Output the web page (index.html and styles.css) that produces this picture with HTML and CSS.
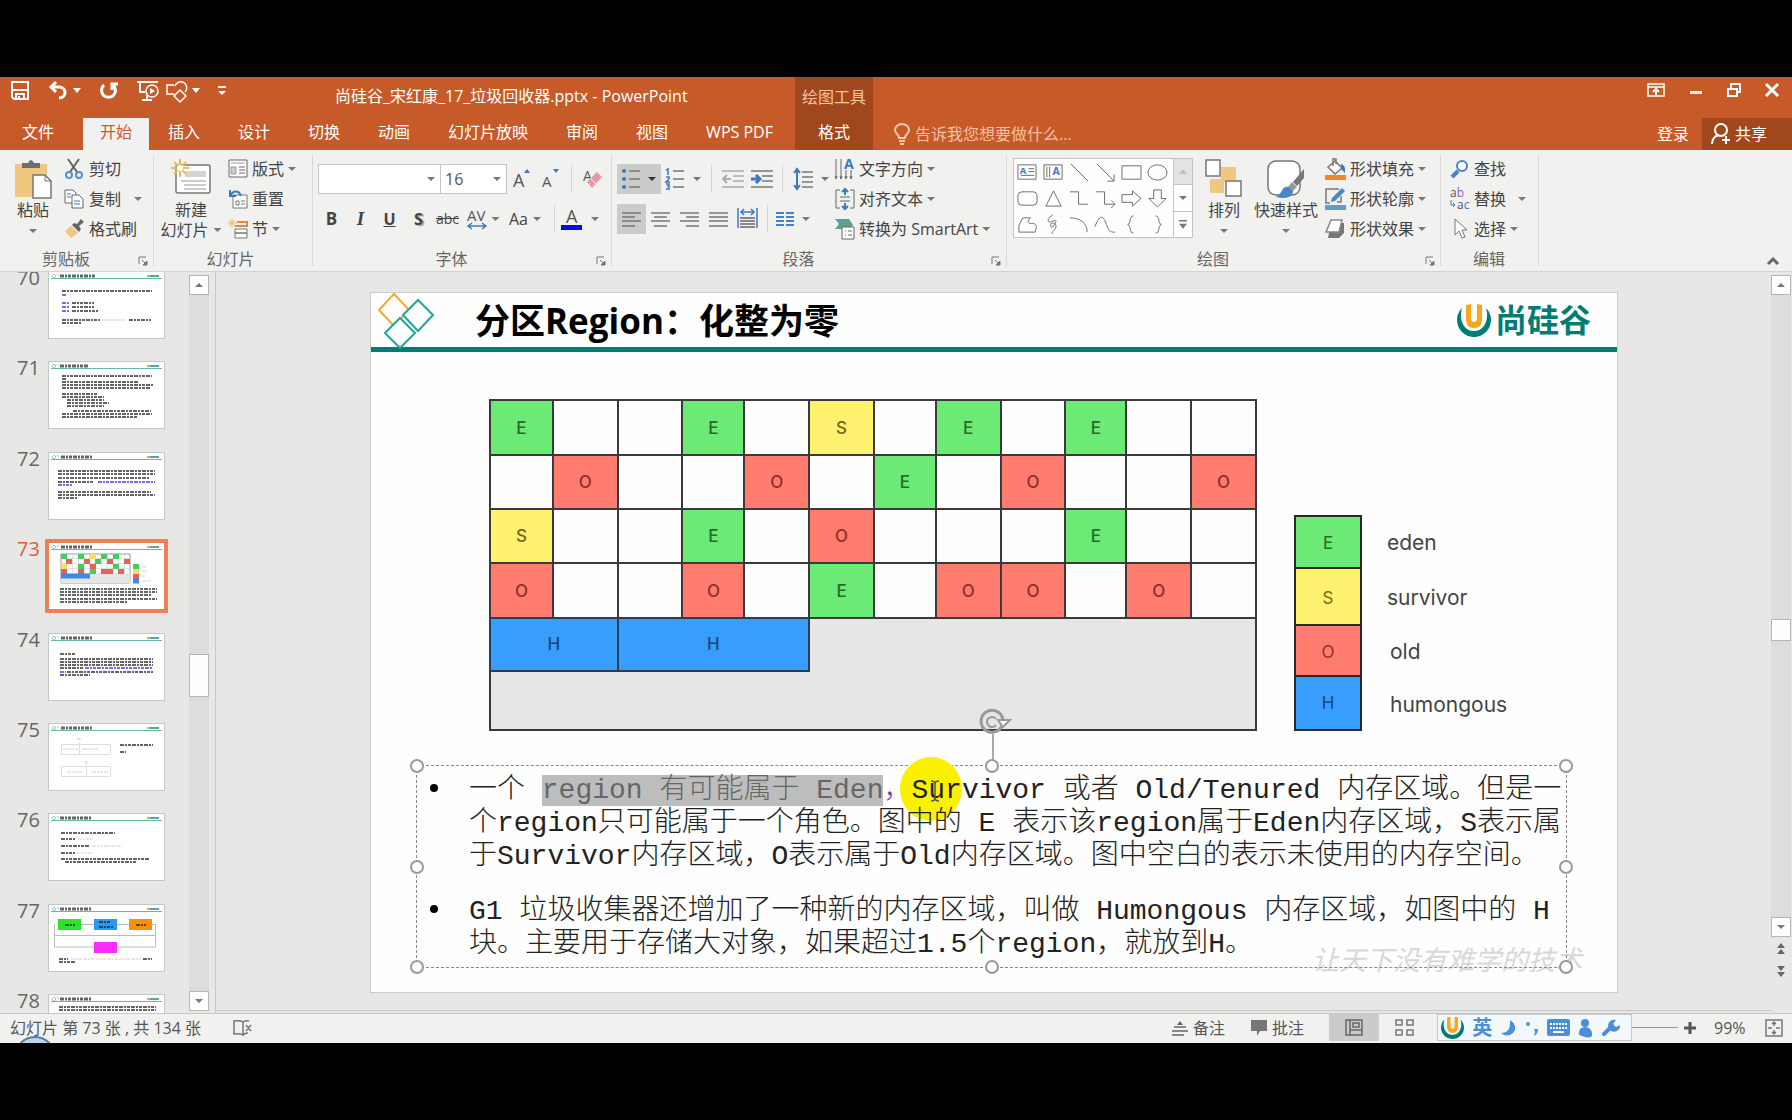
FILE: index.html
```html
<!DOCTYPE html>
<html lang="zh-CN">
<head>
<meta charset="utf-8">
<title>尚硅谷_宋红康_17_垃圾回收器.pptx - PowerPoint</title>
<link rel="stylesheet" href="styles.css">
</head>
<body>
<svg class="defs" width="0" height="0" aria-hidden="true">
  <defs>
    <symbol id="launcher" viewBox="0 0 10 10"><path d="M1 8V1h7" fill="none" stroke="#777"/><path d="M4 4l4 4M9 5v4H5z" fill="#777" stroke="#777"/></symbol>
    <symbol id="ulogo" viewBox="0 0 34 34"><path d="M5 5A17 17 0 1 0 29 5C32 14 29 28 17 28S2 14 5 5z" fill="#007d72"/><path d="M9 2l5-1v14q0 4 3 4t3-4V1l5 1v14q0 9-8 9t-8-9z" fill="#f9a61a"/></symbol>
    <symbol id="thumbhead" viewBox="0 0 115 8"><path d="M5 2l2 2-2 2-2-2zM8 2l2 2" fill="none" stroke="#8fd0c8" stroke-width="1"/><path d="M2 6.500H113" stroke="#63b7ae"/><path d="M98 4h12" stroke="#5aa79f" stroke-width="2"/><path d="M98 4h3" stroke="#d8b04e" stroke-width="2"/></symbol>
  </defs>
</svg>
<div class="app">
  <header class="titlebar">
    <div class="title-left">
      <div class="caption">
        <div class="qat">
          <button aria-label="保存"><svg width="20" height="20" viewBox="0 0 20 20" fill="none" stroke="#fff" stroke-width="2"><path d="M2 1h16v17H4l-2-2zM3 9h14M6 18v-5h8v5M9 15v3"/></svg></button>
          <button class="undo" aria-label="撤消"><svg width="20" height="20" viewBox="0 0 20 20" fill="none" stroke="#fff" stroke-width="3"><path d="M8 1L3 6l5 5M3 6h8c8 0 8 11 0 11"/></svg></button><i class="caret light"></i>
          <button class="redo" aria-label="重复"><svg width="20" height="20" viewBox="0 0 20 20" fill="none" stroke="#fff" stroke-width="3"><path d="M5 4a7 7 0 1 0 9 0M13 9V3h6" /></svg></button>
          <button class="show" aria-label="放映"><svg width="22" height="22" viewBox="0 0 22 22" fill="none" stroke="#fff" stroke-width="1.500"><path d="M0 2h21M3 2v10h5M10 15v4M5 20h10" stroke-width="2"/><circle cx="15" cy="11" r="6"/><path d="M13 8l5 3-5 3z" fill="#fff" stroke="none"/></svg></button>
          <button class="shapes-q" aria-label="形状"><svg width="22" height="22" viewBox="0 0 22 22" fill="none" stroke="#fff" stroke-width="1.500"><path d="M8 14H1V5h7M9 6a6 6 0 1 1 10 6M14 10l6 6-6 6-6-6z"/></svg></button><i class="caret light"></i>
          <button class="more-q" aria-label="自定义"><svg width="8" height="10" viewBox="0 0 8 10" fill="#fff"><path d="M0 0h8v2H0zM0 5h8L4 9z"/></svg></button>
        </div>
        <h1>尚硅谷_宋红康_17_垃圾回收器.pptx - PowerPoint</h1>
      </div>
      <nav class="tabs">
        <a href="#" class="file">文件</a><a href="#" class="active">开始</a><a href="#">插入</a><a href="#">设计</a><a href="#">切换</a><a href="#">动画</a><a href="#">幻灯片放映</a><a href="#">审阅</a><a href="#">视图</a><a href="#">WPS PDF</a>
      </nav>
    </div>
    <div class="context"><span>绘图工具</span><a href="#">格式</a></div>
    <label class="tellme"><svg width="16" height="22" viewBox="0 0 16 22" fill="none" stroke="#f3c8b2" stroke-width="2"><path d="M5 15c0-4-4-4-4-8a7 6 0 0 1 14 0c0 4-4 4-4 8zM5 18h6M6 21h4"/></svg><input type="text" placeholder="告诉我您想要做什么..." aria-label="告诉我"></label>
    <div class="title-right">
      <div class="win">
        <button aria-label="功能区显示选项"><svg width="18" height="14" viewBox="0 0 18 14" fill="none" stroke="#fff" stroke-width="2"><path d="M1 1h16v12H1zM1 4h16" stroke-width="1.500"/><path d="M9 12V7M6 9l3-3 3 3"/></svg></button>
        <button aria-label="最小化"><svg width="14" height="14" viewBox="0 0 14 14"><path d="M1 8h12v3H1z" fill="#fff"/></svg></button>
        <button aria-label="还原"><svg width="14" height="14" viewBox="0 0 14 14" fill="none" stroke="#fff" stroke-width="2"><path d="M1 6h9v7H1zM4 5V1h9v8h-3"/></svg></button>
        <button aria-label="关闭"><svg width="14" height="14" viewBox="0 0 14 14" stroke="#fff" stroke-width="3"><path d="M1 1l12 12M13 1L1 13"/></svg></button>
      </div>
      <div class="account"><a href="#">登录</a><button class="share"><svg width="20" height="22" viewBox="0 0 20 22" fill="none" stroke="#fff" stroke-width="2"><circle cx="10" cy="7" r="6"/><path d="M1 21c0-5 3-8 7-9M15 13v8M11 17h8"/></svg>共享</button></div>
    </div>
  </header>

  <section class="ribbon">
    <div class="group g-clip">
      <div class="body">
        <button class="big"><svg width="38" height="40" viewBox="0 0 38 40"><path d="M1 5h32v33H1z" fill="#f0c77e"/><path d="M8 9V4h6q3-6 6 0h6v5z" fill="#6e6e6e"/><path d="M19 16h12l6 6v17H19z" fill="#fff" stroke="#777" stroke-width="1.500"/><path d="M31 16v6h6" fill="none" stroke="#777"/></svg><span>粘贴</span><i class="caret"></i></button>
        <div class="stack">
          <button><svg width="20" height="20" viewBox="0 0 20 20" fill="none" stroke="#666" stroke-width="2"><path d="M4 0l9 13M15 0L6 13"/><g stroke="#5b8fce"><circle cx="5" cy="16" r="3"/><circle cx="15" cy="16" r="3"/></g></svg>剪切</button>
          <button><svg width="20" height="20" viewBox="0 0 20 20" fill="#fff" stroke="#666"><path d="M1 1h8l3 3v10H1z"/><path d="M8 6h7l4 4v9H8z"/><path d="M3 5h4M3 8h4M10 12h6M10 15h6" stroke="#3c78c0"/></svg>复制<i class="caret far"></i></button>
          <button><svg width="20" height="20" viewBox="0 0 20 20"><path d="M1 12l6-5 7 7-7 5z" fill="#f0c77e"/><path d="M8 6l7 7 2-3-2-3 5-4-3-3-4 5-3-1z" fill="#666"/></svg>格式刷</button>
        </div>
      </div>
      <div class="foot"><span>剪贴板</span><svg width="10" height="10"><use href="#launcher"/></svg></div>
    </div>

    <div class="group g-slides">
      <div class="body">
        <button class="big"><svg width="40" height="40" viewBox="0 0 40 40"><rect x="5" y="6" width="34" height="28" rx="2" fill="#fff" stroke="#777" stroke-width="1.500"/><path d="M14 12h21v6H14z" fill="#d4d4d4"/><path d="M10 22h25M13 26h22M13 30h22" stroke="#999"/><path d="M9 0v18M0 9h18M3 3l12 12M15 3L3 15" stroke="#f0b957" stroke-width="2"/><circle cx="9" cy="9" r="3" fill="#fff"/></svg><span>新建</span><span class="wide">幻灯片<i class="caret"></i></span></button>
        <div class="stack">
          <button><svg width="20" height="20" viewBox="0 0 20 20" fill="#fff" stroke="#666"><path d="M1 1h18v17H1z"/><path d="M3 4h14M3 8h5v7H3z" fill="#ccc" stroke="#999"/><path d="M11 8h6M11 11h6M11 14h6"/></svg>版式<i class="caret"></i></button>
          <button><svg width="20" height="20" viewBox="0 0 20 20" fill="#fff" stroke="#777"><path d="M5 6h14v13H5z"/><path d="M8 12h3v4H8zM13 12h4M13 15h4"/><path d="M2 1v6h6M2 7c3-6 9-6 11 0" fill="none" stroke="#3c78c0" stroke-width="2"/></svg>重置</button>
          <button><svg width="20" height="20" viewBox="0 0 20 20" fill="none"><path d="M4 0v9M0 4h9M1 1l6 6M7 1L1 7" stroke="#f0b957"/><path d="M9 3h10v4H7" stroke="#e08b3c" stroke-width="2"/><path d="M7 10h12v4H7zM7 14h12v5H7z" fill="#fff" stroke="#777"/></svg>节<i class="caret"></i></button>
        </div>
      </div>
      <div class="foot"><span>幻灯片</span></div>
    </div>

    <div class="group g-font">
      <div class="body rows">
        <div class="row">
          <span class="combo face"><select aria-label="字体"><option></option></select><i class="caret"></i></span><span class="combo size"><select aria-label="字号"><option>16</option></select><i class="caret"></i></span>
          <button class="t29" aria-label="增大字号"><svg width="18" height="22" viewBox="0 0 18 22"><text x="0" y="19" class="ico" font-size="18">A</text><path d="M11 5l3-4 3 4z" fill="#3c78c0"/></svg></button>
          <button class="t29" aria-label="减小字号"><svg width="18" height="22" viewBox="0 0 18 22"><text x="0" y="19" class="ico" font-size="15">A</text><path d="M11 1h6l-3 4z" fill="#3c78c0"/></svg></button>
          <i class="sep"></i>
          <button class="t29" aria-label="清除格式"><svg width="20" height="22" viewBox="0 0 20 22"><text x="0" y="13" class="ico" font-size="14">A</text><path d="M4 14L14 4l5 5L9 20z" fill="#e899a8"/><path d="M7 10l6 6" stroke="#f1f1f0"/></svg></button>
        </div>
        <div class="row fmt">
          <button class="t29"><b>B</b></button><button class="t29"><i class="it">I</i></button><button class="t29"><u>U</u></button><button class="t29 shadow">S</button><button class="t29 strike">abc</button>
          <button class="av" aria-label="字符间距"><svg width="20" height="22" viewBox="0 0 20 22"><text x="0" y="13" class="ico" font-size="15">AV</text><path d="M2 18h16M5 15l-4 3 4 3M15 15l4 3-4 3" fill="none" stroke="#3c78c0" stroke-width="1.500"/></svg><i class="caret"></i></button>
          <button class="aa">Aa<i class="caret"></i></button>
          <i class="sep"></i>
          <button class="fc" aria-label="字体颜色"><svg width="22" height="24" viewBox="0 0 22 24"><text x="5" y="16" class="ico" font-size="18">A</text><path d="M0 18h21v5H0z" fill="#0a0aee"/></svg><i class="caret"></i></button>
        </div>
      </div>
      <div class="foot"><span>字体</span><svg width="10" height="10"><use href="#launcher"/></svg></div>
    </div>

    <div class="group g-para">
      <div class="body">
        <div class="rows">
          <div class="row">
            <button class="on p44" aria-label="项目符号"><svg width="18" height="22" viewBox="0 0 18 22"><g fill="#3c78c0"><circle cx="2" cy="3" r="2"/><circle cx="2" cy="11" r="2"/><circle cx="2" cy="19" r="2"/></g><path d="M7 3h11M7 11h11M7 19h11" stroke="#777" stroke-width="1.500"/></svg><i class="caret dark"></i></button>
            <button class="p44" aria-label="编号"><svg width="20" height="22" viewBox="0 0 20 22"><path d="M1 2l2-1v6M1 9h3v2l-3 3h4M1 16h3v5H1M2 18h2" fill="none" stroke="#3c78c0" stroke-width="1.500"/><path d="M8 3h11M8 11h11M8 19h11" stroke="#777" stroke-width="1.500"/></svg><i class="caret"></i></button>
            <i class="sep"></i>
            <button class="t29" aria-label="减少缩进"><svg width="22" height="18" viewBox="0 0 22 18" stroke="#aaa" stroke-width="1.500" fill="none"><path d="M0 1h22M11 6h11M11 11h11M0 17h22"/><path d="M1 9h8M5 5L1 9l4 4" stroke-width="2"/></svg></button>
            <button class="t29" aria-label="增加缩进"><svg width="22" height="18" viewBox="0 0 22 18" stroke="#777" stroke-width="1.500" fill="none"><path d="M0 1h22M11 6h11M11 11h11M0 17h22"/><path d="M0 9h9M5 5l4 4-4 4" stroke="#3c78c0" stroke-width="3"/></svg></button>
            <i class="sep"></i>
            <button class="p44" aria-label="行距"><svg width="20" height="22" viewBox="0 0 20 22" fill="none"><path d="M4 1v20M1 5l3-4 3 4M1 17l3 4 3-4" stroke="#3c78c0" stroke-width="2"/><path d="M9 4h11M9 9h11M9 14h11M9 19h11" stroke="#777" stroke-width="1.500"/></svg><i class="caret"></i></button>
          </div>
          <div class="row">
            <button class="on t29" aria-label="左对齐"><svg width="19" height="15" viewBox="0 0 19 15" stroke="#777" stroke-width="1.500"><path d="M0 1h19M0 5h13M0 9h19M0 14h13"/></svg></button>
            <button class="t29" aria-label="居中"><svg width="19" height="15" viewBox="0 0 19 15" stroke="#777" stroke-width="1.500"><path d="M0 1h19M3 5h13M0 9h19M3 14h13"/></svg></button>
            <button class="t29" aria-label="右对齐"><svg width="19" height="15" viewBox="0 0 19 15" stroke="#777" stroke-width="1.500"><path d="M0 1h19M6 5h13M0 9h19M6 14h13"/></svg></button>
            <button class="t29" aria-label="两端对齐"><svg width="19" height="15" viewBox="0 0 19 15" stroke="#777" stroke-width="1.500"><path d="M0 1h19M0 5h19M0 9h19M0 14h19"/></svg></button>
            <button class="t29" aria-label="分散对齐"><svg width="21" height="22" viewBox="0 0 21 22" fill="none"><path d="M1 0v20M20 0v20M4 4h13M7 1L4 4l3 3M14 1l3 3-3 3" stroke="#3c78c0" stroke-width="1.500"/><path d="M3 10h15M3 13h15M3 16h15M3 19h15" stroke="#666" stroke-width="1.500"/></svg></button>
            <i class="sep s2"></i>
            <button class="cols" aria-label="分栏"><svg width="18" height="16" viewBox="0 0 18 16" stroke="#4a80c4" stroke-width="2"><path d="M0 2h8M0 6h8M0 10h8M0 14h8M10 2h8M10 6h8M10 10h8M10 14h8"/></svg><i class="caret"></i></button>
          </div>
        </div>
        <div class="stack">
          <button><svg width="20" height="22" viewBox="0 0 20 22"><path d="M1 1v19M6 1v19M11 12v8M16 12v8M0 18l1 3 1-3M5 18l1 3 1-3M10 18l1 3 1-3M15 18l1 3 1-3" stroke="#666" fill="none"/><text x="9" y="11" class="blue" font-size="14">A</text></svg>文字方向<i class="caret"></i></button>
          <button><svg width="20" height="22" viewBox="0 0 20 22" fill="none"><path d="M5 2H1v18h4M15 2h4v18h-4M5 9h10M5 13h10" stroke="#666"/><path d="M10 1v6M7 4l3-3 3 3M10 15v6M7 18l3 3 3-3" stroke="#3c78c0" stroke-width="2"/></svg>对齐文本<i class="caret"></i></button>
          <button><svg width="20" height="22" viewBox="0 0 20 22"><path d="M0 1h14l4 6-3 4H0l4-5z" fill="#5ba08f"/><path d="M7 9h12v12H7z" fill="#fff" stroke="#666"/><path d="M10 13h1M13 13h4M10 17h1M13 17h4" stroke="#666"/></svg>转换为 SmartArt<i class="caret"></i></button>
        </div>
      </div>
      <div class="foot"><span>段落</span><svg width="10" height="10"><use href="#launcher"/></svg></div>
    </div>

    <div class="group g-draw">
      <div class="body">
        <div class="gallery">
          <div class="shapes">
            <svg viewBox="0 0 22 22"><path d="M1 3h19v15H1z"/><path d="M12 7h6M12 10h6M4 14h14"/><text x="3" y="13" class="blue" font-size="10">A</text></svg>
            <svg viewBox="0 0 22 22"><path d="M1 3h19v15H1z"/><path d="M4 5v11M7 5v11"/><text x="10" y="14" class="blue" font-size="11">A</text></svg>
            <svg viewBox="0 0 22 22"><path d="M2 2l18 18"/></svg>
            <svg viewBox="0 0 22 22"><path d="M2 2l18 18M20 13v7h-7"/></svg>
            <svg viewBox="0 0 22 22"><path d="M1 4h20v14H1z"/></svg>
            <svg viewBox="0 0 22 22"><ellipse cx="11" cy="11" rx="10" ry="8"/></svg>
            <svg viewBox="0 0 22 22"><rect x="1" y="4" width="20" height="14" rx="4"/></svg>
            <svg viewBox="0 0 22 22"><path d="M11 3l8 16H3z"/></svg>
            <svg viewBox="0 0 22 22"><path d="M1 4h9v13h10"/></svg>
            <svg viewBox="0 0 22 22"><path d="M1 4h9v13h11M17 13l4 4-4 4"/></svg>
            <svg viewBox="0 0 22 22"><path d="M1 7h11V3l9 8-9 8v-4H1z"/></svg>
            <svg viewBox="0 0 22 22"><path d="M7 2h8v9h5l-9 9-9-9h5z"/></svg>
            <svg viewBox="0 0 22 22"><path d="M2 19V12L6 4h8c-4 4-2 6 1 6 4-1 6 2 5 5l-1 4z"/></svg>
            <svg viewBox="0 0 22 22"><path d="M10 1c-6 4-6 9-1 7s6-2 3 3-4 3-4 0 8-1 5 4-4 3-3 6"/></svg>
            <svg viewBox="0 0 22 22"><path d="M1 4c10 0 18 5 18 15"/></svg>
            <svg viewBox="0 0 22 22"><path d="M0 13C6-2 9 3 12 11s5 8 9 8"/></svg>
            <svg viewBox="0 0 22 22"><path d="M13 2c-5 0-2 8-6 9 4 1 1 9 6 9"/></svg>
            <svg viewBox="0 0 22 22"><path d="M9 2c5 0 2 8 6 9-4 1-1 9-6 9"/></svg>
          </div>
          <div class="gscroll"><button class="off" aria-label="上一行"><i class="caret up"></i></button><button aria-label="下一行"><i class="caret"></i></button><button aria-label="更多"><i class="caret line"></i></button></div>
        </div>
        <button class="big arrange"><svg width="38" height="40" viewBox="0 0 38 40"><path d="M16 8h15v15H16zM5 20h14v14H5z" fill="#f0c77e"/><path d="M1 1h14v16H1zM21 22h15v15H21z" fill="#fff" stroke="#777" stroke-width="1.500"/></svg><span>排列</span><i class="caret"></i></button>
        <button class="big quick"><svg width="40" height="40" viewBox="0 0 40 40"><rect x="2" y="2" width="32" height="34" rx="8" fill="#fff" stroke="#777" stroke-width="1.500"/><path d="M38 10v9l-7 8-4-4z" fill="#777"/><path d="M26 23l5 5-4 4-5-4z" fill="#999"/><path d="M10 38c7-3 5-12 13-10l4 4c0 7-8 8-17 6z" fill="#4b87c8"/></svg><span>快速样式</span><i class="caret"></i></button>
        <div class="stack">
          <button><svg width="21" height="22" viewBox="0 0 21 22"><path d="M0 17h21v5H0z" fill="#f0882b"/><path d="M3 9l7-6 7 7-7 6zM8 8V1h3v5" fill="#fff" stroke="#777" stroke-width="1.500"/><path d="M16 6q5 1 4 9l-4-4z" fill="#3c78c0"/></svg>形状填充<i class="caret"></i></button>
          <button><svg width="21" height="22" viewBox="0 0 21 22"><path d="M0 17h21v5H0z" fill="#5f9bd4"/><path d="M14 1H1v14h4M16 8v6h-4" fill="none" stroke="#777" stroke-width="1.500"/><path d="M6 14l1-4L17 0l3 3L10 13z" fill="#4b87c8"/></svg>形状轮廓<i class="caret"></i></button>
          <button><svg width="21" height="22" viewBox="0 0 21 22"><path d="M6 5h13v10l-5 5H3z" fill="#777"/><path d="M6 2h11l-3 12H1z" fill="#fff" stroke="#888" stroke-width="1.500"/></svg>形状效果<i class="caret"></i></button>
        </div>
      </div>
      <div class="foot"><span>绘图</span><svg width="10" height="10"><use href="#launcher"/></svg></div>
    </div>

    <div class="group g-edit">
      <div class="body">
        <div class="stack">
          <button><svg width="20" height="20" viewBox="0 0 20 20" fill="#fff" stroke="#4b80c0" stroke-width="2"><path d="M8 12l-6 6" stroke-width="4"/><circle cx="12" cy="7" r="5"/></svg>查找</button>
          <button><svg width="20" height="22" viewBox="0 0 20 22"><text x="0" y="9" font-size="12" class="ico">a<tspan fill="#9a5cc0">b</tspan></text><text x="7" y="21" font-size="12" class="ico">a<tspan fill="#3c78c0">c</tspan></text><path d="M1 12v5h4M3 15l2 2-2 2" fill="none" stroke="#3c78c0"/></svg>替换<i class="caret far"></i></button>
          <button><svg width="20" height="22" viewBox="0 0 20 22" fill="#fff" stroke="#777"><path d="M5 1v16l4-4 3 7 3-1-3-7h5z"/></svg>选择<i class="caret"></i></button>
        </div>
      </div>
      <div class="foot"><span>编辑</span></div>
    </div>
    <button class="collapse" aria-label="折叠功能区"><svg width="12" height="9" viewBox="0 0 12 9" fill="none" stroke="#666" stroke-width="3"><path d="M1 7l5-5 5 5"/></svg></button>
  </section>

  <main class="work">
    <aside class="outline">
      <ol class="thumbs">
        <li><span>70</span><svg viewBox="0 0 115 66"><use href="#thumbhead" width="115" height="8"/><g class="tx"><path d="M11 4h35" class="k"/><path d="M13 19h90M23 31h22M23 35h22M23 39h26M13 48h38M13 51h20M80 48h22"/><path d="M13 23h5M13 31h7M13 35h7M13 39h7" class="bl"/><path d="M53 48h24" class="g"/></g></svg></li>
        <li><span>71</span><svg viewBox="0 0 115 66"><use href="#thumbhead" width="115" height="8"/><g class="tx"><path d="M11 4h28" class="k"/><path d="M13 14h90M13 17h5M13 20h76M13 23h91M13 26h88M13 32h36M13 35h42M18 38h37M18 41h42M18 44h37M24 49h78M13 52h90M13 55h75"/></g></svg></li>
        <li><span>72</span><svg viewBox="0 0 115 66"><use href="#thumbhead" width="115" height="8"/><g class="tx"><path d="M12 4h32" class="k"/><path d="M9 18h97M9 21h97M9 25h92M9 29h36M9 39h93M9 42h97M9 45h20"/><path d="M49 29h57M9 32h14" class="bl"/></g></svg></li>
        <li class="sel"><span>73</span><svg viewBox="0 0 115 66"><use href="#thumbhead" width="115" height="8"/><path d="M12 11h69v29H12z" fill="#fff" stroke="#999"/><path d="M12 30h69v10H12z" fill="#e5e5e5"/><path d="M12 15.500h69M12 20.500h69M12 25.500h69M17.500 11v19M23.500 11v19M29.500 11v19M35 11v19M40.500 11v19M46.500 11v19M52.500 11v19M58 11v19M64 11v19M69.500 11v19M75.500 11v19" stroke="#ccc" stroke-width=".6"/><path d="M12 11h6v5h-6zM29 11h6v5h-6zM52 11h6v5h-6zM64 11h6v5h-6zM46 16h6v5h-6zM29 21h6v5h-6zM64 21h6v5h-6zM41 26h6v5h-6zM84 21h6v5h-6z" fill="#49c964"/><path d="M17 16h6v5h-6zM35 16h6v5h-6zM58 16h6v5h-6zM75 16h6v5h-6zM41 21h6v5h-6zM12 26h6v5h-6zM29 26h6v5h-6zM52 26h12v5H52zM69 26h6v5h-6zM84 31h6v5h-6z" fill="#e4625c"/><path d="M41 11h6v5h-6zM12 21h6v5h-6zM84 26h6v5h-6z" fill="#f3dd63"/><path d="M12 30.500h29v5H12zM84 35.500h6v5h-6z" fill="#3a8ae0"/><g class="tx"><path d="M12 4h32" class="k"/><path d="M93 24h4M93 28h6M93 33h3M93 38h9" class="g"/><path d="M11 46h97M11 49h97M11 52h92M11 56h97M11 59h68"/></g></svg></li>
        <li><span>74</span><svg viewBox="0 0 115 66"><use href="#thumbhead" width="115" height="8"/><g class="tx"><path d="M12 4h32" class="k"/><path d="M11 20h15M11 25h93M11 28h93M11 31h93M11 34h24M18 38h86M11 41h30"/><path d="M36 34h68M11 38h6" class="bl"/></g></svg></li>
        <li><span>75</span><svg viewBox="0 0 115 66"><use href="#thumbhead" width="115" height="8"/><path d="M12.500 20.500h49v10h-49zM30.500 18v12M12.500 42.500h49v10h-49zM37.500 39v13" fill="none" stroke="#ddd"/><g class="tx"><path d="M12 4h32" class="k"/><path d="M28 15h5M14 25h15M33 25h17M35 38h5M18 48h15M43 48h16" class="g"/><path d="M71 21h33M71 28h6"/></g></svg></li>
        <li><span>76</span><svg viewBox="0 0 115 66"><use href="#thumbhead" width="115" height="8"/><g class="tx"><path d="M11 4h31" class="k"/><path d="M12 19h54M12 25h14M12 32h28M12 39h14M12 45h89M16 48h72"/><path d="M29 25h15M43 32h30M27 39h16" class="g"/></g></svg></li>
        <li><span>77</span><svg viewBox="0 0 115 66"><use href="#thumbhead" width="115" height="8"/><path d="M5.500 19v23h40M5 30.500h101M106.500 19v23H68M32 19.500h13M68 19.500h12M103 19.500h3" fill="none" stroke="#bbb"/><path d="M9 14h23v11H9z" fill="#2be32b"/><path d="M45 14h23v11H45z" fill="#2d95f5"/><path d="M80 14h23v11H80z" fill="#fb8f05"/><path d="M45 37h23v11H45z" fill="#fb2dfb"/><g class="tx"><path d="M11 4h31" class="k"/><path d="M16 20h10M50 17h12M50 22h14M87 20h10M10 54h9M10 57h17M94 54h9"/><path d="M22 54h70" class="g"/></g></svg></li>
        <li><span>78</span><svg viewBox="0 0 115 66"><use href="#thumbhead" width="115" height="8"/><g class="tx"><path d="M11 4h31" class="k"/><path d="M10 12h97M10 15h97"/></g></svg></li>
      </ol>
      <div class="vscroll left"><button aria-label="向上"><i class="caret up"></i></button><span class="knob"></span><button aria-label="向下"><i class="caret"></i></button></div>
    </aside>
    <section class="stage">
      <article class="slide">
        <header class="slide-head">
          <svg class="diamonds" width="58" height="56" viewBox="0 0 58 56" fill="none" stroke-width="2"><path d="M17 2l15 16-15 16L2 18z" stroke="#f5a92e"/><path d="M41 8l15 15-15 16-15-16z" stroke="#1fa79b" fill="#fdfefd"/><path d="M23 26l15 15-15 15L8 41z" stroke="#1fa79b" fill="#fdfefd"/></svg>
          <h2>分区Region<span class="colon">：</span>化整为零</h2>
          <div class="brand"><svg width="34" height="34"><use href="#ulogo"/></svg><span>尚硅谷</span></div>
        </header>
        <div class="figure">
          <div class="heap">
            <b class="e">E</b><b></b><b></b><b class="e">E</b><b></b><b class="s">S</b><b></b><b class="e">E</b><b></b><b class="e">E</b><b></b><b></b>
            <b></b><b class="o">O</b><b></b><b></b><b class="o">O</b><b></b><b class="e">E</b><b></b><b class="o">O</b><b></b><b></b><b class="o">O</b>
            <b class="s">S</b><b></b><b></b><b class="e">E</b><b></b><b class="o">O</b><b></b><b></b><b></b><b class="e">E</b><b></b><b></b>
            <b class="o">O</b><b></b><b></b><b class="o">O</b><b></b><b class="e">E</b><b></b><b class="o">O</b><b class="o">O</b><b></b><b class="o">O</b><b></b>
            <b class="free"></b><b class="h h1">H</b><b class="h h2">H</b>
          </div>
          <dl class="legend">
            <dt class="e">E</dt><dd>eden</dd>
            <dt class="s">S</dt><dd>survivor</dd>
            <dt class="o">O</dt><dd class="in">old</dd>
            <dt class="h">H</dt><dd class="in">humongous</dd>
          </dl>
        </div>
        <p class="watermark">让天下没有难学的技术</p>
        <div class="textbox">
          <span class="pointer"></span>
          <ul>
            <li>一个 <mark>region 有可能属于 Eden</mark><span class="comma">，</span>Survivor 或者 Old/Tenured 内存区域。但是一<br>个region只可能属于一个角色。图中的 E 表示该region属于Eden内存区域，S表示属<br>于Survivor内存区域，O表示属于Old内存区域。图中空白的表示未使用的内存空间。</li>
            <li>G1 垃圾收集器还增加了一种新的内存区域，叫做 Humongous 内存区域，如图中的 H<br>块。主要用于存储大对象，如果超过1.5个region，就放到H。</li>
          </ul>
          <svg class="ibeam" width="10" height="22" viewBox="0 0 10 22" fill="none" stroke="#555" stroke-width="1.500"><path d="M1 1q4 0 4 3v14q0 3-4 3M9 1q-4 0-4 3M5 18q0 3 4 3"/></svg>
          <span class="stem"></span>
          <svg class="rotate" width="34" height="28" viewBox="0 0 34 28" fill="none" stroke="#999" stroke-width="3"><path d="M24 18a11 11 0 1 1 1-6" /><path d="M20 12h12l-7 7z" fill="#fff" stroke-width="2"/><path d="M18 17a5 5 0 1 1 0-6" stroke-width="2"/></svg>
          <i class="handle nw"></i><i class="handle n"></i><i class="handle ne"></i><i class="handle w"></i><i class="handle ea"></i><i class="handle sw"></i><i class="handle so"></i><i class="handle se"></i>
        </div>
      </article>
    </section>
    <div class="vscroll right"><button aria-label="向上"><i class="caret up"></i></button><span class="knob"></span><button aria-label="向下"><i class="caret"></i></button>
      <button class="jump" aria-label="上一张"><svg width="10" height="12" viewBox="0 0 10 12" fill="#666"><path d="M5 0l4 5H1zM5 6l4 5H1z"/></svg></button>
      <button class="jump" aria-label="下一张"><svg width="10" height="12" viewBox="0 0 10 12" fill="#666"><path d="M5 5l4-5H1zM5 11l4-5H1z"/></svg></button></div>
  </main>

  <footer class="status">
    <span class="orb"></span>
    <span class="count">幻灯片 第 73 张 , 共 134 张</span>
    <svg class="spell" width="20" height="18" viewBox="0 0 20 18" fill="none" stroke="#777" stroke-width="1.500"><path d="M10 16q-3-2-9-1V2q6-1 9 1zM10 3q2-2 6-1M10 16q2-2 5-2M13 6l5 6M18 6l-5 6"/></svg>
    <button class="notes"><svg width="16" height="16" viewBox="0 0 16 16"><path d="M5 5l3-4 3 4z" fill="#666"/><path d="M2 7h12M0 11h16M0 15h12" stroke="#666" stroke-width="1.500"/></svg>备注</button>
    <button class="comments"><svg width="16" height="16" viewBox="0 0 16 16" fill="#777"><path d="M0 0h16v11H9l-3 5v-5H0z"/></svg>批注</button>
    <button class="view on" aria-label="普通视图"><svg width="18" height="17" viewBox="0 0 18 17" fill="none" stroke="#666" stroke-width="1.500"><path d="M1 1h16v15H1zM5 1v15M5 11h12M8 4h6v4H8z"/></svg></button>
    <button class="view" aria-label="幻灯片浏览"><svg width="19" height="17" viewBox="0 0 19 17" fill="none" stroke="#777" stroke-width="1.500"><path d="M1 1h6v5H1zM12 1h6v5h-6zM1 11h6v5H1zM12 11h6v5h-6z"/></svg></button>
    <div class="ime">
      <svg width="23" height="23"><use href="#ulogo"/></svg><b>英</b>
      <svg width="17" height="18" viewBox="0 0 17 18"><path d="M10 1q9 6 3 13-6 5-12 0 10 0 9-13z" fill="#4b8fd8"/></svg>
      <svg width="13" height="18" viewBox="0 0 13 18" fill="#4b8fd8"><circle cx="3" cy="5" r="2"/><path d="M9 10h4q0 5-4 7l1-4z"/></svg>
      <svg width="23" height="17" viewBox="0 0 23 17"><rect width="23" height="17" rx="2" fill="#4b8fd8"/><path d="M3 5h17M3 9h17" stroke="#fff" stroke-width="2" stroke-dasharray="2 1"/><path d="M6 13h11" stroke="#fff" stroke-width="2"/></svg>
      <svg width="15" height="18" viewBox="0 0 15 18" fill="#4b8fd8"><circle cx="7" cy="4" r="4"/><path d="M1 14q0-6 6-6t7 6-7 4-6-4z"/></svg>
      <svg width="19" height="18" viewBox="0 0 19 18"><path d="M3 15l8-8" stroke="#4b8fd8" stroke-width="4" stroke-linecap="round"/><path d="M15 1a6 6 0 1 0 4 5l-4 2-3-3z" fill="#4b8fd8"/></svg>
    </div>
    <span class="track"></span>
    <button class="plus" aria-label="放大"><svg width="12" height="12" viewBox="0 0 12 12" stroke="#555" stroke-width="3"><path d="M6 0v12M0 6h12"/></svg></button>
    <span class="zoom">99%</span>
    <button class="fit" aria-label="适应窗口"><svg width="18" height="18" viewBox="0 0 18 18" fill="none" stroke="#777" stroke-width="1.500"><path d="M1 1h16v16H1zM9 3v4M9 11v4M3 9h4M11 9h4M7 5l2-2 2 2M7 13l2 2 2-2"/></svg></button>
  </footer>
</div>
</body>
</html>
```
FILE: styles.css
```css
* { box-sizing: border-box; }
body {
  margin: 0; height: 100vh; padding: 77px 0; background: #000; color: #444; overflow: hidden;
  font: 16px/20px "Open Sans", "Noto Sans CJK SC", sans-serif;
}
button { border: 0; background: none; padding: 0; color: inherit; font: inherit; display: flex; align-items: center; justify-content: center; white-space: nowrap; }
a { color: inherit; text-decoration: none; }
svg { flex: none; display: block; overflow: visible; }
.defs { position: absolute; }
.app { height: 100%; display: flex; flex-direction: column; background: #e7e7e6; }

.caret { flex: none; width: 8px; height: 4px; background: #777; clip-path: polygon(0 0, 100% 0, 50% 100%); margin-left: 5px; }
.caret.light { background: #fff; height: 5px; margin: 0; }
.caret.dark { background: #333; }
.caret.up { clip-path: polygon(50% 0, 100% 100%, 0 100%); margin: 0; }
.caret.line { height: 9px; clip-path: polygon(0 0, 100% 0, 100% 20%, 0 20%, 0 45%, 100% 45%, 50% 100%, 0 45%); }
.caret.far { margin-left: 11px; }
.ico { fill: #555; font-family: "Open Sans", sans-serif; }
.blue { fill: #3c78c0; font-weight: 700; font-family: "Open Sans", sans-serif; }

/* title bar */
.titlebar { display: flex; height: 73px; flex: none; background: #c65a29; color: #fff; }
.title-left { width: 795px; display: flex; flex-direction: column; }
.caption { display: flex; height: 41px; }
.qat { display: flex; align-items: center; height: 27px; padding-left: 10px; width: 335px; }
.undo { margin: 0 5px 0 18px; }
.redo { margin-left: 18px; }
.show { margin-left: 18px; }
.shapes-q { margin: 0 4px 0 7px; }
.more-q { margin-left: 18px; }
h1 { margin: 0; font-size: 16px; font-weight: 400; line-height: 39px; white-space: nowrap; }
.tabs { display: flex; line-height: 29px; height: 32px; white-space: nowrap; }
.tabs a { padding: 0 19px; }
.tabs .file { width: 83px; padding-left: 22px; }
.tabs .active { width: 66px; padding: 0; text-align: center; background: #f1f1f0; color: #d2552b; }
.context { width: 78px; background: #a1471d; text-align: center; display: flex; flex-direction: column; }
.context span { line-height: 41px; color: #f6c5a4; }
.context a { line-height: 29px; }
.tellme { display: flex; align-self: flex-end; align-items: center; height: 32px; margin-left: 21px; gap: 5px; }
.tellme input { border: 0; background: none; padding: 0; width: 200px; font: inherit; color: #fff; outline: 0; }
.tellme input::placeholder { color: #f3c0a6; opacity: 1; }
.title-right { margin-left: auto; display: flex; flex-direction: column; align-items: flex-end; justify-content: space-between; }
.win { display: flex; gap: 24px; padding: 6px 13px 0 0; }
.account { display: flex; align-items: center; gap: 13px; height: 32px; line-height: 28px; }
.share { background: #a1471d; height: 32px; width: 90px; justify-content: flex-start; padding-left: 9px; gap: 4px; }

/* ribbon */
.ribbon { display: flex; height: 122px; flex: none; background: #f1f1f0; border-bottom: 1px solid #d2d3d2; }
.group { display: flex; flex-direction: column; position: relative; padding-top: 4px; background: linear-gradient(#d8d9d8, #d8d9d8) right 5px / 1px 111px no-repeat; }
.body { display: flex; height: 90px; }
.foot { display: flex; align-items: center; height: 27px; padding: 3px 6px 0 0; color: #666; line-height: 24px; }
.foot span { flex: 1; text-align: center; padding-right: 6px; }
.foot svg { margin-top: 4px; }
.big { flex-direction: column; justify-content: flex-start; padding-top: 5px; }
.big span { line-height: 22px; }
.big > .caret { margin: 8px 0 0; }
.big .wide { display: flex; align-items: center; line-height: 18px; }
.stack { display: grid; grid-auto-rows: 30px; justify-items: start; }
.stack button { gap: 4px; }
.stack .caret { margin-left: 0; }
.stack .caret.far { margin-left: 8px; }
.rows { display: flex; flex-direction: column; gap: 10px; padding-top: 10px; }
.row { display: flex; height: 30px; align-items: center; }
.row button { height: 30px; }
.t29 { width: 29px; }
.on { background: #cbcbca; }
.sep { width: 1px; height: 28px; background: #d2d3d2; margin: 0 6px; }
.g-clip { width: 154px; }
.g-clip .body { padding-left: 9px; gap: 7px; }
.g-clip .big { width: 48px; }
.g-clip .stack button { gap: 5px; }
.g-slides { width: 159px; }
.g-slides .body { padding-left: 6px; gap: 6px; }
.g-slides .big { width: 62px; }
.g-slides .foot { padding-right: 0; }
.g-font { width: 299px; }
.g-font .body { padding-left: 5px; height: 90px; }
.combo { position: relative; display: flex; align-items: center; height: 30px; background: #fff; border: 1px solid #c3c4c3; margin-right: -1px; }
.combo select { appearance: none; border: 0; background: none; width: 100%; height: 28px; padding: 0 4px; font: inherit; color: #555; }
.combo .caret { position: absolute; right: 5px; pointer-events: none; }
.face { width: 123px; }
.size { width: 67px; margin-right: 0; }
.fmt { margin-left: -1px; }
.fmt b { font-size: 17px; }
.fmt .it { font-family: "Liberation Serif", serif; font-size: 19px; font-weight: 700; }
.fmt u { font-weight: 700; }
.shadow { font-weight: 700; text-shadow: 2px 1px 1px #999; }
.strike { font-size: 14px; text-decoration: line-through; }
.av { width: 40px; padding-left: 2px; }
.aa { width: 46px; }
.fc { width: 38px; }
.fmt .fc .caret { margin-left: 8px; }
.g-para { width: 395px; }
.g-para .body { padding-left: 5px; }
.p44 { width: 44px; }
.g-para .p44 .caret { margin-left: 8px; }
.row .s2 { margin: 0 8px 0 5px; }
.cols .caret { margin-left: 8px; }
.g-para .stack { margin-left: 2px; }
.g-draw { width: 434px; }
.g-draw .body { padding-left: 6px; }
.gallery { display: flex; margin-top: 4px; height: 80px; width: 180px; border: 1px solid #c3c4c3; background: #fdfefd; }
.shapes { flex: 1; display: grid; grid-template-columns: repeat(6, 26px); grid-auto-rows: 26px; place-items: center; }
.shapes svg { width: 21px; height: 21px; fill: none; stroke: #6a6a6a; stroke-width: 1; }
.shapes svg text { fill: #3c78c0; stroke: none; }
.gscroll { width: 19px; display: flex; flex-direction: column; border-left: 1px solid #c3c4c3; }
.gscroll button { flex: 1; border-top: 1px solid #c3c4c3; }
.gscroll .caret { margin: 0; }
.gscroll .off { border: 0; background: #e3e3e3; }
.gscroll .off .caret { background: #bbb; }
.arrange { width: 42px; margin-left: 10px; }
.quick { width: 66px; margin: 0 6px 0 8px; }
.g-edit { width: 98px; }
.g-edit .body { padding-left: 9px; }
.g-edit .foot { padding-right: 0; }
.g-edit .foot span { padding-right: 2px; }
.collapse { margin: auto 13px 5px auto; }

/* work area */
.work { flex: 1; min-height: 0; display: flex; }
.outline { width: 216px; flex: none; display: flex; overflow: hidden; border-right: 1px solid #c6c8c7; }
.thumbs { list-style: none; margin: 0 0 -48px; padding: 0; width: 189px; flex: none; display: flex; flex-direction: column; justify-content: space-between; }
.thumbs li { display: flex; gap: 8px; padding-left: 17px; font-size: 20px; line-height: 12px; color: #666; }
.thumbs li span { width: 24px; }
.thumbs svg { width: 115px; height: 66px; background: #fff; outline: 1px solid #c3c8c6; overflow: hidden; }
.thumbs .sel { color: #d9603a; }
.thumbs .sel svg { outline: 4px solid #ee8158; }
.tx path { fill: none; stroke: #222; stroke-width: 2; stroke-dasharray: 4 1 2 1 3 1; opacity: .7; }
.tx .k { stroke-width: 3; }
.tx .bl { stroke: #3434e8; }
.tx .g { stroke: #bbb; stroke-width: 1; }
.vscroll { width: 20px; display: flex; flex-direction: column; background: #dcdedd; margin: 3px 0 2px; align-self: stretch; }
.vscroll button { height: 20px; flex: none; background: #fdfefd; border: 1px solid #b4b6b5; }
.vscroll .caret { margin: 0; }
.vscroll .knob { height: 43px; background: #fdfefd; border: 1px solid #b4b6b5; }
.left .knob { margin: 359px 0 auto; }
.right { margin: 3px 1px 2px 0; }
.right .knob { height: 22px; margin: 324px 0 auto; }
.right .jump { border: 0; background: #e7e7e6; height: 23px; }
.right .jump:last-child { height: 51px; align-items: flex-start; padding-top: 6px; }
.stage { flex: 1; min-width: 0; padding: 20px 153px 17px 154px; display: flex; margin-bottom: 2px; border-bottom: 1px solid #c6c8c7; }
.slide { flex: 1; min-width: 0; position: relative; background: #fdfefd; border: 1px solid #c9cccb; }
.slide-head { display: flex; align-items: center; height: 59px; border-bottom: 5px solid #007d72; padding: 0 26px 0 6px; }
.slide-head h2 { margin: 0 0 0 40px; font: 700 35px/54px "Open Sans", "Noto Sans CJK SC", sans-serif; color: #000; white-space: nowrap; }
.colon { font-family: "Noto Sans CJK TC", sans-serif; }
.brand { margin-left: auto; display: flex; align-items: center; gap: 4px; color: #007d72; font-size: 32px; line-height: 40px; font-weight: 700; }
.figure { display: flex; align-items: flex-end; padding: 47px 0 0 118px; font-family: Inter, sans-serif; }
.heap { width: 768px; height: 332px; flex: none; display: grid; gap: 2px; padding: 2px; background: #3a3a3a;
  grid-template-columns: 61fr 63fr 63fr 60fr 63fr 63fr 60fr 63fr 63fr 59fr 63fr 63fr; grid-template-rows: 53fr 52fr 52fr 52fr 51fr 57fr; }
.heap b, .legend dt { background: #fdfefd; display: flex; align-items: center; justify-content: center; font-size: 17px; font-weight: 500; min-width: 0; }
.figure .e { background: #6bea75; color: #246b2a; }
.figure .s { background: #fff26e; color: #77691d; }
.figure .o { background: #ff7c6e; color: #8b3128; }
.figure .h { background: #379efe; color: #1c4675; }
.heap .free { grid-area: 5 / 1 / 7 / 13; background: #e7e5e6; }
.heap .h { box-shadow: 0 0 0 2px #2a3d55; }
.heap .h1 { grid-area: 5 / 1 / 6 / 3; }
.heap .h2 { grid-area: 5 / 3 / 6 / 6; }
.legend { margin: 0 0 0 37px; display: grid; grid-template-columns: 68px auto; grid-template-rows: 52px 57px 51px 56px; column-gap: 25px; }
.legend dt { border: 2px solid #2a2a2a; border-bottom: 0; font-weight: 400; padding-top: 2px; }
.legend dt.h { border-bottom: 2px solid #2a2a2a; padding: 0; }
.legend dd { margin: 0; align-self: center; padding-top: 4px; font-size: 21px; color: #444; }
.legend .in { padding-left: 3px; }
.textbox { position: relative; margin: 34px 50px 0 45px; height: 203px; border: 1px dashed #888; padding: 8px 0 0 52px; }
.textbox ul { position: relative; margin: 0; padding: 0; list-style: none; font: 400 28px/33px "Liberation Mono", "Noto Sans CJK SC Light", "Noto Sans CJK SC", monospace; color: #222; white-space: nowrap; }
.textbox li { position: relative; margin-bottom: 22px; }
.textbox li::before { content: ""; position: absolute; left: -39px; top: 10px; width: 8px; height: 8px; border-radius: 50%; background: #000; }
.textbox mark { background: #bdbdbd; color: #666; }
.comma { color: #7b3c8e; }
.pointer { position: absolute; left: 483px; top: -9px; width: 62px; height: 64px; border-radius: 50%; background: #fbf000; }
.ibeam { position: absolute; left: 513px; top: 14px; }
.handle { position: absolute; width: 14px; height: 14px; border: 2px solid #999; border-radius: 50%; background: #fdfefd; transform: translate(-50%, -50%); }
.nw, .n, .ne { top: 0; } .w, .ea { top: 50%; } .sw, .so, .se { top: 100%; }
.nw, .w, .sw { left: 0; } .n, .so { left: 50%; } .ne, .ea, .se { left: 100%; }
.stem { position: absolute; left: 50%; top: -32px; width: 2px; height: 26px; background: #aaa; }
.rotate { position: absolute; left: calc(50% - 14px); top: -58px; }
.watermark { position: absolute; right: 35px; bottom: 15px; margin: 0; font-size: 27px; line-height: 34px; font-style: italic; color: #d6d9d7; }

/* status bar */
.status { display: flex; align-items: center; height: 30px; flex: none; background: #f1f1f0; border-top: 1px solid #c6c8c7; padding: 0 9px 2px 10px; color: #555; position: relative; overflow: hidden; }
.orb { position: absolute; left: 14px; top: 22px; width: 42px; height: 42px; border-radius: 50%; border: 2px solid #4d7ba5; background: #bcd3e8; }
.count { white-space: nowrap; width: 223px; }
.status button { gap: 5px; }
.notes { margin-left: auto; }
.comments { margin: 0 25px 0 26px; }
.status .view { width: 50px; height: 27px; }
.ime { display: flex; align-items: center; justify-content: space-between; width: 195px; height: 27px; margin-left: 8px; padding: 0 11px 0 3px; background: #f3f8fd; border: 1px solid #c0cbd3; color: #4b8fd8; font-size: 20px; }
.track { width: 46px; height: 1px; background: #999; margin-right: 6px; }
.zoom { margin: 0 17px 0 18px; width: 34px; white-space: nowrap; }
```
